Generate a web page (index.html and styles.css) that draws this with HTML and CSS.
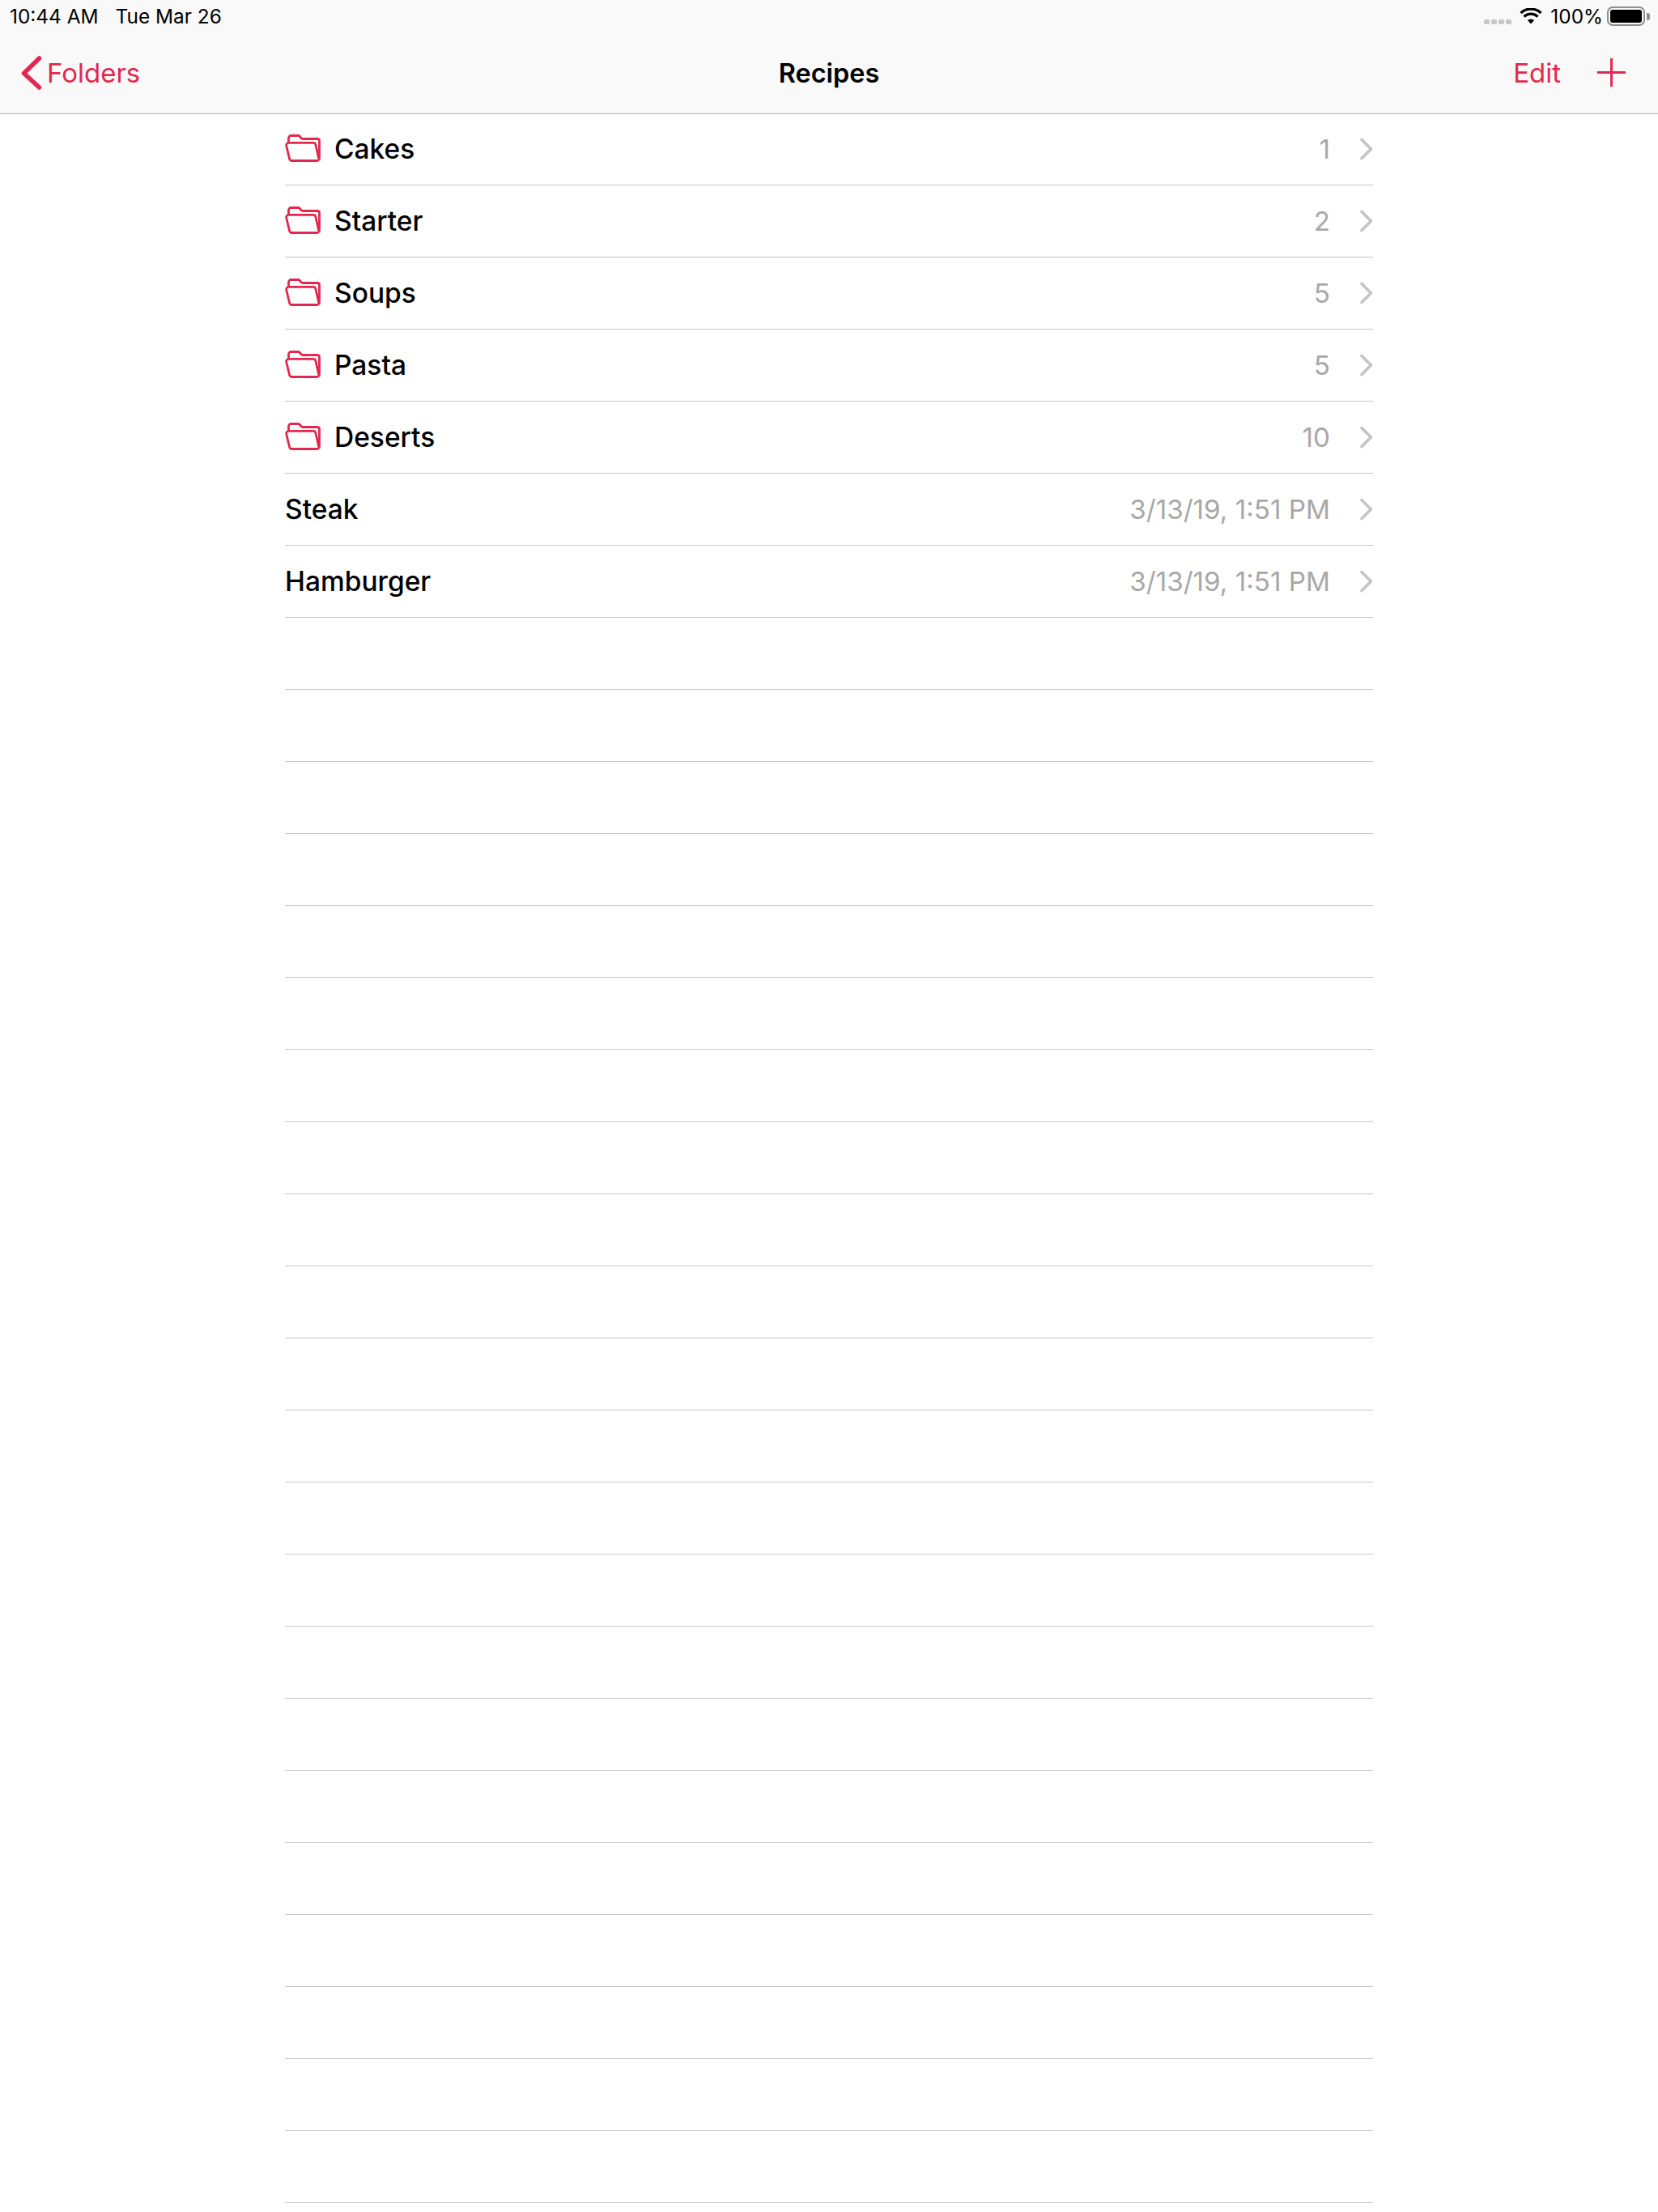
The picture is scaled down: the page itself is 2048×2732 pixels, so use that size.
FILE: index.html
```html
<!DOCTYPE html>
<html lang="en">
<head>
<meta charset="utf-8">
<title>Recipes</title>
<link rel="stylesheet" href="styles.css">
</head>
<body>
<svg class="defs" width="0" height="0" aria-hidden="true">
  <symbol id="folder" viewBox="0 0 44 34">
    <path d="M4.500 10V4.500A3 3 0 0 1 7.500 1.500H16A3 3 0 0 1 18.300 2.500L20 4.500A3 3 0 0 0 22.300 5.500H40A2.500 2.500 0 0 1 42.500 8V29.500A3 3 0 0 1 39.500 32.500H8.500A3 3 0 0 1 5.600 30.200L1.700 14A3 3 0 0 1 4.600 10.400H35A3 3 0 0 1 37.900 12.700L42 31" fill="none" stroke="currentColor" stroke-width="2.800" stroke-linejoin="round" stroke-linecap="round"/>
  </symbol>
  <symbol id="chev" viewBox="0 0 16 28">
    <path d="M2 2.500L13.500 14L2 25.500" fill="none" stroke="currentColor" stroke-width="3.600" stroke-linecap="round" stroke-linejoin="round"/>
  </symbol>
</svg>
<header class="topbar">
  <div class="status">
    <div class="status-left"><span>10:44 AM</span><span>Tue Mar 26</span></div>
    <div class="status-right">
      <span class="dots"><i></i><i></i><i></i><i></i></span>
      <svg class="wifi" viewBox="0 0 28 20" aria-hidden="true"><path d="M14 19.500L9.900 15A6 6 0 0 1 18.100 15Z" fill="currentColor"/><path d="M5.500 10.500A12.300 12.300 0 0 1 22.500 10.500M1.500 6A18.300 18.300 0 0 1 26.500 6" fill="none" stroke="currentColor" stroke-width="3.300"/></svg>
      <span class="pct">100%</span>
      <span class="battery"><span class="battery-fill"></span></span><span class="battery-cap"></span>
    </div>
  </div>
  <nav class="nav">
    <div class="nav-left">
      <svg class="back" viewBox="0 0 26 42" aria-hidden="true"><path d="M22.500 3L3.500 21.500L22.500 39" fill="none" stroke="currentColor" stroke-width="5.500" stroke-linecap="round" stroke-linejoin="round"/></svg>
      <span>Folders</span>
    </div>
    <div class="nav-title">Recipes</div>
    <div class="nav-right">
      <span>Edit</span>
      <svg class="plus" viewBox="0 0 36 36" aria-hidden="true"><path d="M18 0V36M0 18H36" stroke="currentColor" stroke-width="3"/></svg>
    </div>
  </nav>
</header>
<main class="list">
  <div class="row"><svg class="folder"><use href="#folder"/></svg><span class="name">Cakes</span><span class="meta">1</span><svg class="chev"><use href="#chev"/></svg></div>
  <div class="row"><svg class="folder"><use href="#folder"/></svg><span class="name">Starter</span><span class="meta">2</span><svg class="chev"><use href="#chev"/></svg></div>
  <div class="row"><svg class="folder"><use href="#folder"/></svg><span class="name">Soups</span><span class="meta">5</span><svg class="chev"><use href="#chev"/></svg></div>
  <div class="row"><svg class="folder"><use href="#folder"/></svg><span class="name">Pasta</span><span class="meta">5</span><svg class="chev"><use href="#chev"/></svg></div>
  <div class="row"><svg class="folder"><use href="#folder"/></svg><span class="name">Deserts</span><span class="meta">10</span><svg class="chev"><use href="#chev"/></svg></div>
  <div class="row"><span class="name">Steak</span><span class="meta">3/13/19, 1:51 PM</span><svg class="chev"><use href="#chev"/></svg></div>
  <div class="row"><span class="name">Hamburger</span><span class="meta">3/13/19, 1:51 PM</span><svg class="chev"><use href="#chev"/></svg></div>
  <div class="row"></div><div class="row"></div><div class="row"></div><div class="row"></div><div class="row"></div><div class="row"></div><div class="row"></div>
  <div class="row"></div><div class="row"></div><div class="row"></div><div class="row"></div><div class="row"></div><div class="row"></div><div class="row"></div>
  <div class="row"></div><div class="row"></div><div class="row"></div><div class="row"></div><div class="row"></div><div class="row"></div><div class="row"></div>
  <div class="row"></div>
</main>
</body>
</html>
```
FILE: styles.css
```css
* { box-sizing: border-box; }
html, body { margin: 0; padding: 0; height: 2732px; overflow: hidden; background: #fff; }
body { font-family: Inter, "Liberation Sans", sans-serif; color: #000; }
.defs { display: block; height: 0; }

.topbar { height: 140px; background: #f9f9f9; box-shadow: 0 1px 0 #b2b2b2; }

.status { height: 40px; padding: 0 10px 0 12px; display: flex; justify-content: space-between; align-items: center; font-size: 24.4px; line-height: 40px; }
.status-left { display: flex; gap: 21px; }
.status-right { display: flex; align-items: center; }
.dots { display: flex; gap: 2px; margin: 14px 10px 0 0; }
.dots i { width: 7px; height: 6px; border-radius: 2px; background: #c6c6c6; }
.wifi { width: 28px; height: 20px; margin-right: 10px; }
.pct { margin-right: 5px; }
.battery { width: 47px; height: 24px; border: 2px solid #8e8e8e; border-radius: 7px; padding: 2px; display: flex; }
.battery-fill { flex: 1; background: #000; border-radius: 3px; }
.battery-cap { width: 4px; height: 9px; margin-left: 2px; background: #8e8e8e; border-radius: 0 3px 3px 0; }

.nav { height: 100px; display: grid; grid-template-columns: 1fr auto 1fr; align-items: center; padding: 0 26px; font-size: 33px; color: #e3284f; }
.nav-left { display: flex; align-items: center; gap: 6px; }
.back { width: 26px; height: 42px; }
.nav-title { color: #000; font-weight: 600; font-size: 32.400px; }
.nav-right { display: flex; align-items: center; justify-content: flex-end; gap: 45px; padding-right: 14px; }
.plus { width: 35px; height: 35px; margin-top: -2px; }

.list { width: 1344px; margin: 0 auto; }
.row { height: 89px; border-bottom: 1px solid #c8c7cc; display: flex; align-items: center; font-size: 33.500px; }
.folder { width: 44px; height: 34px; margin: -2px 17px 0 0; color: #e3284f; }
.name { font-weight: 500; }
.meta { margin-left: auto; color: #a8a8a8; font-size: 33.200px; }
.chev { width: 16px; height: 28px; margin-left: 37px; color: #c4c4c7; }
```
